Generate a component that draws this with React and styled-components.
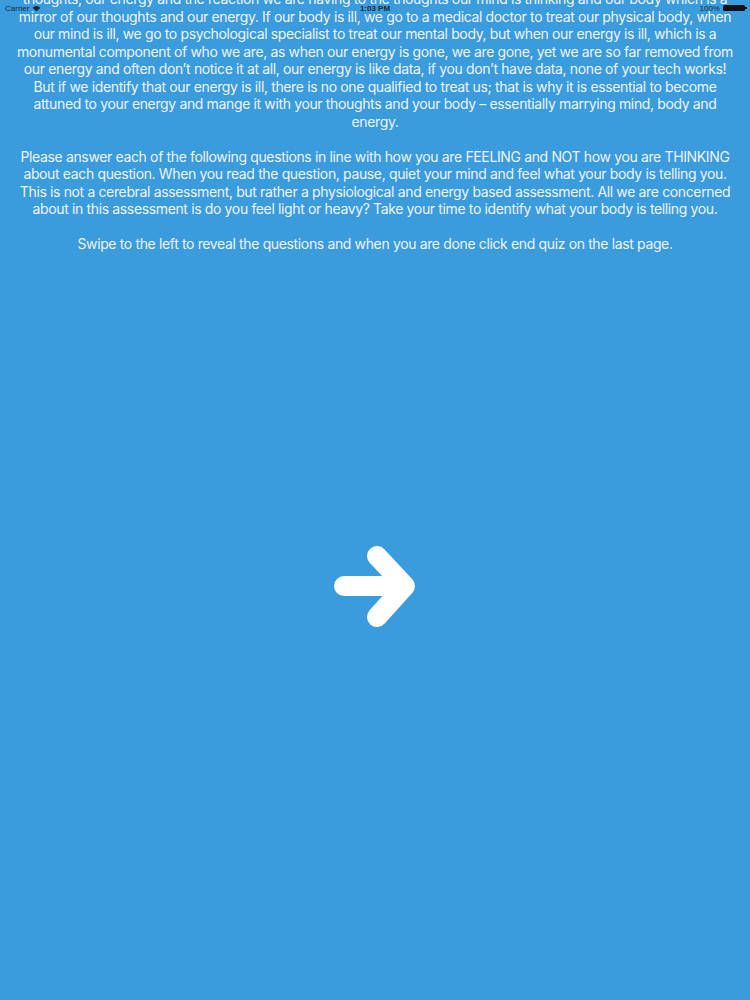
import React from "react";
import styled, { createGlobalStyle } from "styled-components";

const GlobalStyle = createGlobalStyle`
  html, body { margin: 0; padding: 0; background: #3a9bdd; }
  body { font-family: Inter, "Noto Sans", "Liberation Sans", sans-serif; overflow: hidden; }
  * { box-sizing: border-box; }
`;

const Screen = styled.div`
  position: relative;
  width: 750px;
  height: 1000px;
  background: #3a9bdd;
  overflow: hidden;
`;

const StatusBar = styled.div`
  position: absolute;
  top: 1px;
  left: 0;
  right: 0;
  height: 14px;
  display: flex;
  align-items: center;
  justify-content: space-between;
  padding: 0 5px;
  font-family: "Liberation Sans", Arial, sans-serif;
  font-size: 8px;
  color: #1c2a36;
  z-index: 2;
`;

const StatusSide = styled.div`
  display: flex;
  align-items: center;
  gap: 3px;
  width: 120px;
  justify-content: ${(p) => (p.$end ? "flex-end" : "flex-start")};
`;

const Clock = styled.div`
  font-weight: 700;
`;

const Battery = styled.div`
  width: 22px;
  height: 6px;
  background: #111;
  border-radius: 1.5px;
  position: relative;
  &::after {
    content: "";
    position: absolute;
    right: -2px;
    top: 2px;
    width: 1.5px;
    height: 2px;
    background: #111;
  }
`;

const Content = styled.div`
  display: flex;
  flex-direction: column;
  align-items: center;
  margin-top: -10px;
  padding: 0 10px;
`;

const Paragraph = styled.p`
  margin: 0 0 17.5px;
  width: 100%;
  text-align: center;
  color: #eef4fa;
  font-size: 14px;
  line-height: 17.5px;
  letter-spacing: -0.36px;
`;

const Line = styled.span`
  display: block;
  white-space: nowrap;
`;

const ArrowButton = styled.button`
  margin-top: 274px;
  width: 84px;
  height: 86px;
  border: 0;
  padding: 0;
  background: transparent;
  display: flex;
  align-items: center;
  justify-content: center;
  cursor: pointer;
`;

const Wifi = () => (
  <svg width="9" height="7" viewBox="0 0 10 8">
    <path d="M5 7.5 L0.5 3 A6.5 6.5 0 0 1 9.5 3 Z" fill="#1c2a36" />
  </svg>
);

const intro = [
  "thoughts, our energy and the reaction we are having to the thoughts our mind is thinking and our body which is a",
  "mirror of our thoughts and our energy. If our body is ill, we go to a medical doctor to treat our physical body, when",
  "our mind is ill, we go to psychological specialist to treat our mental body, but when our energy is ill, which is a",
  "monumental component of who we are, as when our energy is gone, we are gone, yet we are so far removed from",
  "our energy and often don’t notice it at all, our energy is like data, if you don’t have data, none of your tech works!",
  "But if we identify that our energy is ill, there is no one qualified to treat us; that is why it is essential to become",
  "attuned to your energy and mange it with your thoughts and your body – essentially marrying mind, body and",
  "energy.",
];

const instructions = [
  "Please answer each of the following questions in line with how you are FEELING and NOT how you are THINKING",
  "about each question. When you read the question, pause, quiet your mind and feel what your body is telling you.",
  "This is not a cerebral assessment, but rather a physiological and energy based assessment. All we are concerned",
  "about in this assessment is do you feel light or heavy? Take your time to identify what your body is telling you.",
];

const swipe = [
  "Swipe to the left to reveal the questions and when you are done click end quiz on the last page.",
];

const Block = ({ lines }) => (
  <Paragraph>
    {lines.map((l, i) => (
      <Line key={i}>{l}</Line>
    ))}
  </Paragraph>
);

export default function App() {
  return (
    <>
      <GlobalStyle />
      <Screen>
        <StatusBar>
          <StatusSide>
            <span>Carrier</span>
            <Wifi />
          </StatusSide>
          <Clock>1:03 PM</Clock>
          <StatusSide $end>
            <span>100%</span>
            <Battery />
          </StatusSide>
        </StatusBar>
        <Content>
          <Block lines={intro} />
          <Block lines={instructions} />
          <Block lines={swipe} />
          <ArrowButton aria-label="Next">
            <svg width="84" height="86" viewBox="0 0 84 86">
              <g fill="none" stroke="#ffffff" strokeWidth="20" strokeLinecap="round" strokeLinejoin="round">
                <path d="M11 42 H66" />
                <path d="M44 12 L72 42 L44 73" />
              </g>
            </svg>
          </ArrowButton>
        </Content>
      </Screen>
    </>
  );
}
